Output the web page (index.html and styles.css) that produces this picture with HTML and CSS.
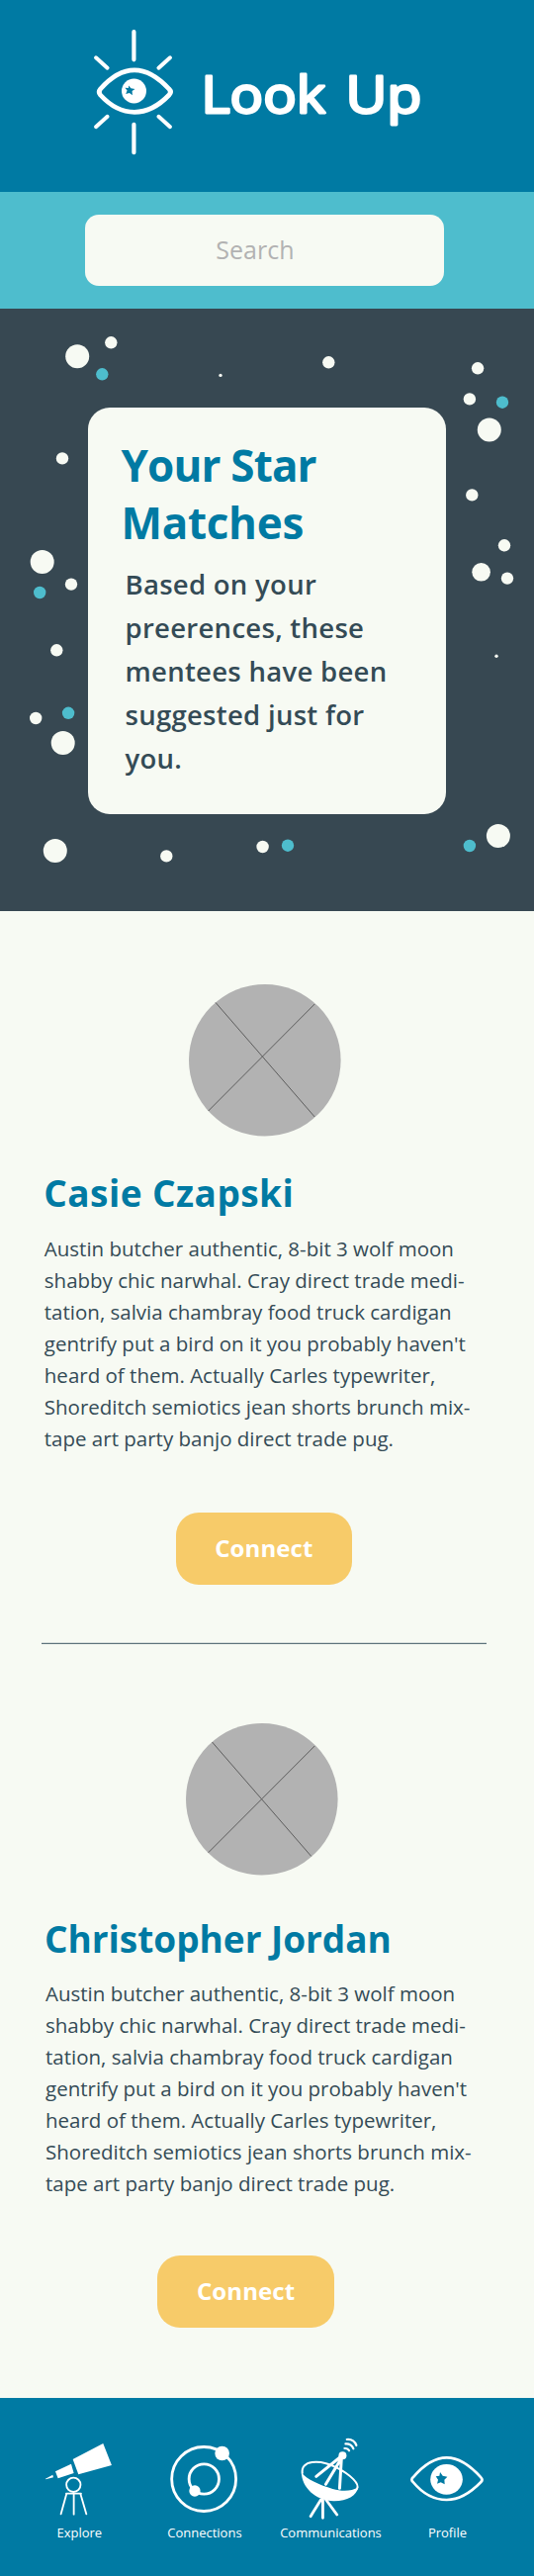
FILE: index.html
```html
<!DOCTYPE html>
<html lang="en">
<head>
<meta charset="utf-8">
<title>Look Up</title>
<link rel="stylesheet" href="styles.css">
</head>
<body>
<header class="header">
  <svg class="logo" viewBox="90 0 360 194" role="img" aria-label="Look Up">
    <g class="line" stroke-width="4.2">
      <path d="M135.4 32v28.3M135.4 125.8v28.4"/>
      <path stroke-width="3.9" d="M97 58.2l11.6 10.6M172 58.2l-11.6 10.6M97 128.2l11.6-10.4M172 128.2l-11.6-10.4"/>
      <path stroke-width="4.8" d="M101.5 90C112 78 124 70.8 136 70.8S160 78 171 90Q174 93 171 96C160 107.500 148 113.300 136 113.300S112 107.500 101.500 96Q99 93 101.500 90Z"/>
    </g>
    <circle cx="135.500" cy="92" r="12.500" fill="#fff"/>
    <path class="star" d="M130.200 86.500l2.200 2.700 4.100.8-2.900 2.100.3 4.100-3-2.300-3.700 1.100 1.400-3.400-2.200-2.800 3.400.1z"/>
    <text class="wordmark" x="203.500" y="113.500" textLength="125.500" lengthAdjust="spacingAndGlyphs">Look</text>
    <text class="wordmark" x="349.500" y="113.500" textLength="77" lengthAdjust="spacingAndGlyphs">Up</text>
  </svg>
</header>

<div class="search"><input class="search-field" type="text" placeholder="Search" aria-label="Search"></div>

<section class="hero">
  <svg class="sky" viewBox="0 312 540 609" aria-hidden="true">
    <g fill="#f7faf3">
      <circle cx="78.200" cy="360.300" r="12"/><circle cx="112.300" cy="346.300" r="6.200"/><circle cx="223" cy="379.400" r="1.700"/>
      <circle cx="332.300" cy="366.300" r="6.200"/><circle cx="483.100" cy="372.300" r="6.200"/><circle cx="474.900" cy="403.400" r="6.200"/>
      <circle cx="494.800" cy="434.600" r="12"/><circle cx="63" cy="463.400" r="6.200"/><circle cx="477.300" cy="500.400" r="6.200"/>
      <circle cx="510" cy="551.300" r="6.200"/><circle cx="486.600" cy="578.300" r="9.300"/><circle cx="513" cy="584.600" r="6.200"/>
      <circle cx="42.700" cy="568" r="12"/><circle cx="72" cy="590.600" r="6.200"/><circle cx="57.300" cy="657.300" r="6.200"/>
      <circle cx="502" cy="663.300" r="1.700"/><circle cx="36.200" cy="726" r="6.200"/><circle cx="63.700" cy="751" r="12"/>
      <circle cx="55.800" cy="860" r="12"/><circle cx="168.300" cy="865.400" r="6.200"/><circle cx="265.600" cy="856" r="6.200"/>
      <circle cx="503.900" cy="845" r="12"/>
    </g>
    <g fill="#4ebdcd">
      <circle cx="103.300" cy="378.300" r="6.200"/><circle cx="508" cy="406.700" r="6.200"/><circle cx="40.200" cy="599" r="6.200"/>
      <circle cx="69.100" cy="720.800" r="6.200"/><circle cx="291" cy="854.700" r="6.200"/><circle cx="474.900" cy="855" r="6.200"/>
    </g>
  </svg>
  <div class="card">
    <h1 class="card-title"><span class="tight">Your Star</span><br>Matches</h1>
    <p class="card-text">Based on your<br>preerences, these<br>mentees have been<br>suggested just for<br>you.</p>
  </div>
</section>

<main>
  <article class="mentee">
    <svg class="avatar" viewBox="191.300 995 153.600 153.600" aria-hidden="true">
      <circle cx="268.100" cy="1071.800" r="76.800"/>
      <path d="M218.300 1013.400L318.500 1129M318.500 1015L211 1123"/>
    </svg>
    <h2 class="name">Casie Czapski</h2>
    <p class="bio">Austin butcher authentic, 8-bit 3 wolf moon<br>shabby chic narwhal. Cray direct trade medi-<br>tation, salvia chambray food truck cardigan<br>gentrify put a bird on it you probably haven't<br>heard of them. Actually Carles typewriter,<br>Shoreditch semiotics jean shorts brunch mix-<br>tape art party banjo direct trade pug.</p>
    <button class="connect">Connect</button>
  </article>
  <hr class="divider">
  <article class="mentee mentee-second">
    <svg class="avatar" viewBox="188.300 1742 153.600 153.600" aria-hidden="true">
      <circle cx="265.100" cy="1818.800" r="76.800"/>
      <path d="M214.800 1761L315 1876.400M318.500 1765L211 1872.700"/>
    </svg>
    <h2 class="name">Christopher Jordan</h2>
    <p class="bio">Austin butcher authentic, 8-bit 3 wolf moon<br>shabby chic narwhal. Cray direct trade medi-<br>tation, salvia chambray food truck cardigan<br>gentrify put a bird on it you probably haven't<br>heard of them. Actually Carles typewriter,<br>Shoreditch semiotics jean shorts brunch mix-<br>tape art party banjo direct trade pug.</p>
    <button class="connect">Connect</button>
  </article>
</main>

<nav class="tabs">
  <a class="tab">
    <svg class="tab-icon" viewBox="-39 0 380 303">
      <path fill="#fff" d="M131 108L223 60L249 126L148 154ZM78 145L126 122L134 150L86 166ZM48 167L70 155L72 163L49 169Z"/>
      <g class="line" stroke-width="5.500"><circle cx="133" cy="185.500" r="21.500"/><path d="M111 212H156M112 212L95 274M134 212V275M154 212L172 274"/></g>
    </svg>
    <span>Explore</span>
  </a>
  <a class="tab">
    <svg class="tab-icon" viewBox="341 0 380 303">
      <g class="line" stroke-width="8.500"><circle cx="527.500" cy="168" r="97.500"/><circle cx="528" cy="168" r="45.500"/></g>
      <circle cx="583" cy="90" r="22" fill="#fff"/><circle cx="500" cy="204" r="17" fill="#fff"/>
    </svg>
    <span>Connections</span>
  </a>
  <a class="tab">
    <svg class="tab-icon" viewBox="0.600 0 386 303">
      <path fill="#fff" d="M105 148C106 194 150 236 205 235C245 235 272 219 278 193C256 206 228 206 200 198C160 186 122 170 105 148Z"/>
      <g class="line" stroke-width="6">
        <path d="M108 150C102 112 158 106 213 134C256 156 282 183 274 197"/>
        <path stroke-width="9" d="M226 99L150 160M230 99L179 184M227 99L221 196"/>
        <path stroke-width="8.500" d="M164 231L133 281M170 231V286M180 231L213 276"/>
        <path stroke-width="6.500" d="M236 75Q246 74 250 82M239 61Q257 60 263 76M243 48Q264 46 272 66"/>
      </g>
      <circle cx="230" cy="97" r="12" fill="#fff"/>
    </svg>
    <span>Communications</span>
  </a>
  <a class="tab">
    <svg class="tab-icon" viewBox="386 0 322 303">
      <path class="line" stroke-width="8" d="M442 163C475 124 506 103 544 103S613 124 648 163Q655 170 648 177C615 211 582 231 544 231S470 211 442 177Q434 170 442 163Z"/>
      <ellipse cx="543.500" cy="169" rx="49" ry="46" fill="#fff"/>
      <path class="star" d="M524 147l8 11 14 3-9 9 1 14-12-6-11 4 3-12-7-10 11-2z"/>
    </svg>
    <span>Profile</span>
  </a>
</nav>
</body>
</html>
```
FILE: styles.css
```css
* { box-sizing: border-box; }

body {
  margin: 0;
  width: 540px;
  background: #f7faf3;
  color: #344b56;
  font-family: "Open Sans", "Noto Sans", sans-serif;
}

h1, h2, p { margin: 0; }

.line {
  fill: none;
  stroke: #fff;
  stroke-linecap: round;
  stroke-linejoin: round;
}

.star { fill: #007aa3; }

.header {
  height: 194px;
  padding-left: 90px;
  background: #007aa3;
}

.logo { display: block; width: 360px; height: 194px; }

.wordmark {
  font-size: 52px;
  font-weight: 400;
  fill: #fff;
  stroke: #fff;
  stroke-width: 2.800px;
  stroke-linejoin: round;
}

.search {
  height: 118px;
  padding: 23.300px 0 0 86.300px;
  background: #4ebdcd;
}

.search-field {
  display: block;
  width: 362.300px;
  height: 72px;
  padding: 0 0 3px 132px;
  border: 0;
  border-radius: 14px;
  background: #f7faf3;
  font: 400 25px "Open Sans", sans-serif;
}

.search-field::placeholder { color: #b2b2b2; opacity: 1; }

.hero {
  display: grid;
  height: 609px;
  background: #374852;
}

.sky, .card { grid-area: 1 / 1; }

.sky { display: block; width: 540px; height: 609px; }

.card {
  z-index: 1;
  width: 362px;
  height: 410.700px;
  margin: 100px 0 0 89.300px;
  padding: 28.500px 0 0 33.200px;
  border-radius: 22px;
  background: #f7faf3;
}

.card-title {
  color: #007aa3;
  font-size: 44px;
  font-weight: 700;
  line-height: 58px;
  letter-spacing: -0.300px;
}

.tight { letter-spacing: -0.850px; }

.card-text {
  margin: 12.500px 0 0 4px;
  font-size: 27.500px;
  font-weight: 600;
  line-height: 44px;
  letter-spacing: 0.290px;
}

.mentee { padding: 74px 0 58.600px 44.300px; }

.avatar {
  display: block;
  width: 153.600px;
  height: 153.600px;
  margin-left: 147px;
  fill: #b2b2b2;
  stroke: none;
}

.avatar path { stroke: #5c5c5c; stroke-width: 1; }

.name {
  margin-top: 33.900px;
  color: #007aa3;
  font-size: 37px;
  font-weight: 700;
  line-height: 48px;
  letter-spacing: 0.450px;
}

.bio {
  margin: 15.800px 0 0 0.500px;
  font-size: 20.500px;
  line-height: 32px;
  white-space: nowrap;
}

.connect {
  display: block;
  width: 178.400px;
  height: 72.400px;
  margin: 59px 0 0 133.400px;
  padding: 0 0 2px;
  border: 0;
  border-radius: 23px;
  background: #f7cb69;
  color: #fff;
  font: 700 24px "Open Sans", sans-serif;
  letter-spacing: 0.100px;
}

.divider {
  width: 450px;
  height: 2px;
  margin: 0 0 0 42px;
  border: 0;
  border-top: 1px solid #d3dad8;
  background: #5d727b;
}

.mentee-second { padding: 80px 0 71.800px 45px; }
.mentee-second .avatar { margin-left: 143.300px; }
.mentee-second .name { margin-top: 40.200px; letter-spacing: -0.030px; }
.mentee-second .bio { margin: 15.200px 0 0 1px; }
.mentee-second .connect { margin: 57px 0 0 114.400px; }

.tabs {
  display: grid;
  grid-template-columns: 126.600px 126.600px 128.600px 107.400px;
  height: 180px;
  padding: 26px 0 0 17px;
  background: #007aa3;
}

.tab {
  display: flex;
  flex-direction: column;
  align-items: center;
  color: #fff;
  font-size: 13px;
  line-height: 18px;
}

.tab-icon { display: block; width: 100%; height: 101px; }
```
